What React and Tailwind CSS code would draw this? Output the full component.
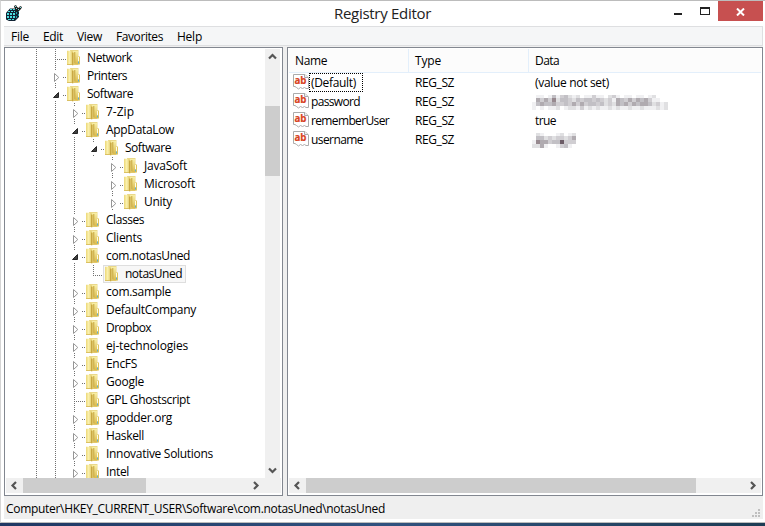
const F = "font-['Open_Sans','Noto_Sans',sans-serif]";

// name, depth, state (c = collapsed, o = open, n = leaf, l = last leaf), continuing guides per outer level
const tree = [
  ["Network", 0, "n", ""],
  ["Printers", 0, "c", ""],
  ["Software", 0, "o", ""],
  ["7-Zip", 1, "c", "|"],
  ["AppDataLow", 1, "o", "|"],
  ["Software", 2, "o", "||"],
  ["JavaSoft", 3, "c", "|| "],
  ["Microsoft", 3, "c", "|| "],
  ["Unity", 3, "c", "|| "],
  ["Classes", 1, "c", "|"],
  ["Clients", 1, "c", "|"],
  ["com.notasUned", 1, "o", "|"],
  ["notasUned", 2, "l", "||"],
  ["com.sample", 1, "c", "|"],
  ["DefaultCompany", 1, "c", "|"],
  ["Dropbox", 1, "c", "|"],
  ["ej-technologies", 1, "c", "|"],
  ["EncFS", 1, "c", "|"],
  ["Google", 1, "c", "|"],
  ["GPL Ghostscript", 1, "n", "|"],
  ["gpodder.org", 1, "c", "|"],
  ["Haskell", 1, "c", "|"],
  ["Innovative Solutions", 1, "c", "|"],
  ["Intel", 1, "c", "|"],
];

const widths = {
  Network: 45, Printers: 40, "7-Zip": 28, AppDataLow: 68, JavaSoft: 43, Microsoft: 51, Unity: 28,
  Software: 46, Classes: 38, Clients: 36, "com.notasUned": 84, notasUned: 57, "com.sample": 65,
  DefaultCompany: 90, Dropbox: 45, "ej-technologies": 82, EncFS: 31, Google: 38, "GPL Ghostscript": 84,
  "gpodder.org": 66, Haskell: 38, "Innovative Solutions": 107, Intel: 23,
};

// Sets a label to an exact advance width by spreading the difference over its letters.
function Label({ w, children, className = "" }) {
  const ref = (el) => {
    if (!el) return;
    el.style.letterSpacing = "0px";
    const natural = el.getBoundingClientRect().width;
    el.style.letterSpacing = `${(w - natural) / children.length}px`;
  };
  return <span ref={ref} className={`inline-block whitespace-pre ${className}`}>{children}</span>;
}

const dots = { stroke: "#707070", strokeWidth: 1, strokeDasharray: "1 1" };

function Guide({ kind }) {
  return (
    <svg width="19" height="18" className="shrink-0 overflow-visible" shapeRendering="crispEdges">
      {(kind === "|" || kind === "n") && <path d="M9.500 0V18" {...dots} />}
      {kind === "l" && <path d="M9.500 0V10" {...dots} />}
      {(kind === "n" || kind === "l") && <path d="M9 10.500H20" {...dots} />}
      {(kind === "c" || kind === "o") && <path d="M9.500 0V4M9.500 16V18M17 10.500H20" {...dots} />}
      {kind === "c" && <path d="M8.500 6.500V14.500L12.800 10.500Z" fill="#fff" stroke="#969696" shapeRendering="auto" />}
      {kind === "o" && <path d="M12.500 7.500V12.500H7.500Z" fill="#404040" stroke="#262626" shapeRendering="auto" />}
    </svg>
  );
}

function Folder() {
  return (
    <svg width="14" height="16" viewBox="0 0 14 16" className="shrink-0">
      <defs>
        <linearGradient id="fa" x1="0" x2="1">
          <stop offset="0" stopColor="#ecd777" />
          <stop offset=".45" stopColor="#fbf2b0" />
          <stop offset="1" stopColor="#dcc25e" />
        </linearGradient>
        <linearGradient id="fb" x1="0" y1="0" x2="0" y2="1">
          <stop offset="0" stopColor="#f8efa8" />
          <stop offset="1" stopColor="#d9b84a" />
        </linearGradient>
      </defs>
      <path d="M3 0H11.500V15H3Z" fill="#ead88a" />
      <path d="M4 1H11V14.500H4Z" fill="url(#fb)" />
      <path d="M11 6.500H13V14.500H11Z" fill="#e0c45c" />
      <path d="M0 .8H5L6 2V15.500L5 15H0Z" fill="url(#fa)" />
      <path d="M5 3L6 2.500V15.200L5 15Z" fill="#c9a842" />
      <path d="M6 3L8 2V13.500L6 15.500Z" fill="#dcc265" />
      <path d="M7.500 2H8.300V13H7.500Z" fill="#c7a742" />
      <path d="M11.500 7V11.500" stroke="#fffce6" />
      <path d="M11.500 11.500V13.500" stroke="#5aaed6" />
      <path d="M0 14.500H5" stroke="#dac062" />
    </svg>
  );
}

function RegString() {
  return (
    <svg width="16" height="16" viewBox="0 0 16 16" className="shrink-0">
      <path d="M.5 .5H12L15.500 4V14.500H13L11.500 13.500L9.500 14.500L7.500 13.500L5.500 15L3.500 13.500L2 12.500H.5Z" fill="#fff" stroke="#ababab" />
      <path d="M11.500 .5V3.500H15" fill="#eee" stroke="#ababab" />
      <text x="1.500" y="10" fontSize="10" fontWeight="700" textLength="12" lengthAdjust="spacingAndGlyphs" fill="#d8431f" stroke="#d8431f" strokeWidth=".2" className="font-['Open_Sans']">ab</text>
    </svg>
  );
}

function RegeditIcon() {
  return (
    <svg width="17" height="17" viewBox="0 0 17 17">
      <path d="M0 8L4 3.500H8L10 5H13V12L9 16H3L0 14.500Z" fill="#123" />
      <path d="M1 8H3V10H1ZM4 8H6V10H4ZM7 8H9V10H7ZM1 11H3V13H1ZM4 11H6V13H4ZM7 11H9V13H7ZM2 14H5V15H2ZM6 14H8V15H6ZM4 4H6V5H4ZM7 4H9V5H7ZM5 6H7V7H5ZM2 6H4V7H2ZM8 6H9V7H8Z" fill="#4be0e0" />
      <path d="M10 7H11V9H10ZM10 11H11V13H10ZM12 9H13V11H12ZM12 6H13V7H12Z" fill="#1ba0a0" />
      <path d="M8 1L10 0L11 2L13 3L14 1L16 2L15 4L13 6L11 7L9 5Z" fill="#1d1d1d" />
      <path d="M9 1H10V2H9ZM10 3H11V4H10ZM12 4H13V5H12ZM14 2H15V3H14Z" fill="#7dd" />
    </svg>
  );
}

const chevrons = {
  left: "M10 4L6.500 7.500L10 11",
  right: "M5 4L8.500 7.500L5 11",
  up: "M4 9.500L7.500 6L11 9.500",
  down: "M4 5.500L7.500 9L11 5.500",
};

function Chevron({ dir }) {
  return (
    <svg width="15" height="15" className="shrink-0">
      <path d={chevrons[dir]} fill="none" stroke="#555" strokeWidth="2.200" />
    </svg>
  );
}

const rows = [
  ["(Default)", 45, "(value not set)", 74],
  ["password", 49, null, "p"],
  ["rememberUser", 78, "true", 21],
  ["username", 52, null, "u"],
];

// Pixelated values, one digit per 4px cell.
const mosaicP = [
  "0 1 1 0 1 4 1 3 4 2 1 2 0 1 1 3 1 1 0 2 3 1 0 1 1 0 1 1 0 1 2 0 0 0",
  "0 5 3 5 3 6 2 4 4 3 2 4 3 4 4 3 4 3 2 3 1 5 4 3 5 3 5 4 5 3 1 1 0 0",
  "1 4 5 4 4 5 3 3 4 3 5 3 5 3 4 4 3 4 2 3 2 5 4 5 3 5 4 5 5 4 2 3 1 2",
  "1 0 1 0 1 1 2 0 1 2 2 1 3 1 2 1 2 1 1 2 1 2 1 1 2 1 1 2 1 1 1 2 1 2",
];
const mosaicU = [
  "0 2 1 0 0 0 1 2 0 1 2",
  "0 4 4 2 3 2 3 3 2 3 5",
  "1 6 5 5 3 4 4 7 3 3 3",
  "2 2 5 1 0 0 1 3 4 1 0",
];
const shades = ["fill-white", "fill-[#f0f0f2]", "fill-[#e0e0e2]", "fill-[#d0ced2]", "fill-[#c2c0c5]", "fill-[#b0abb0]", "fill-[#97898f]", "fill-[#6c5c66]"];

function Mosaic({ data }) {
  return (
    <svg width="136" height="16" className="-ml-[3px] mt-[3px]" shapeRendering="crispEdges">
      {data.map((r, y) => r.split(" ").map((v, x) => (
        <rect key={`${x}-${y}`} x={x * 4} y={y * 4 - (y ? 1 : 0)} width="4" height="4" className={shades[v]} />
      )))}
    </svg>
  );
}

export default function App() {
  return (
    <div className={`${F} flex h-[526px] w-[765px] flex-col overflow-hidden bg-white text-[12px] leading-[18px] text-black`}>
      <div className="flex h-[523px] flex-col border-b border-l border-t border-[#bcbcbc] border-l-[#d5d5d5] pl-[3px]">
        <header className="flex h-[25px] items-start">
          <div className="w-[328px] pl-[2px] pt-[4px]"><RegeditIcon /></div>
          <h1 className="grow pt-px text-[15px] leading-[22px] text-[#222]"><span className="pl-[2px]"><Label w={97}>Registry Editor</Label></span></h1>
          <svg width="44" height="25" shapeRendering="crispEdges" className="shrink-0">
            <path d="M0 12H8V14H0Z" fill="#222" />
            <path d="M26 6H36V14H26ZM27 8V13H35V8Z" fill="#222" fillRule="evenodd" />
          </svg>
          <div className="mr-[2px] flex h-[20px] w-[45px] items-center justify-center bg-[#c75050]">
            <svg width="9" height="8" className="mt-px"><path d="M1 0.500L8 7.500M8 0.500L1 7.500" stroke="#fff" strokeWidth="2" /></svg>
          </div>
        </header>
        <nav className="mr-[2px] flex h-[20px] border-b border-r border-t border-[#dedfe1] bg-[#f5f6f7] pl-[7px] pt-px">
          <div className="w-[32px]"><Label w={18}>File</Label></div>
          <div className="w-[34px]"><Label w={20}>Edit</Label></div>
          <div className="w-[39px]"><Label w={25}>View</Label></div>
          <div className="w-[61px]"><Label w={47}>Favorites</Label></div>
          <div><Label w={25}>Help</Label></div>
        </nav>
        <main className="mr-[2px] flex h-[450px] gap-[4px] bg-[#efefef] pt-px">
          <section className="flex h-[449px] w-[279px] flex-col border border-[#828790] bg-white p-px">
            <div className="flex h-[429px]">
              <div className="w-[259px] overflow-hidden">
                {tree.map(([name, depth, kind, guides], i) => (
                  <div key={i} className="flex h-[18px] pl-[21px]">
                    <Guide kind="|" />
                    {guides.split("").map((g, j) => <Guide key={j} kind={g} />)}
                    <Guide kind={kind} />
                    <div className={`flex h-[18px] shrink-0 items-center pl-px ${kind === "l" ? "border border-[#dedede] bg-[#f7f7f7] pr-[3px]" : "ml-px"}`}>
                      <Folder />
                      <Label w={widths[name]} className="ml-[6px]">{name}</Label>
                    </div>
                  </div>
                ))}
              </div>
              <div className="flex w-[15px] flex-col bg-[#f0f0f0]">
                <Chevron dir="up" />
                <div className="mt-[42px] h-[70px] bg-[#cdcdcd]" />
                <div className="grow" />
                <Chevron dir="down" />
              </div>
            </div>
            <div className="flex h-[15px] items-center bg-[#f0f0f0]">
              <Chevron dir="left" />
              <div className="ml-[2px] h-[15px] w-[123px] bg-[#cdcdcd]" />
              <div className="grow" />
              <div className="mr-[17px]"><Chevron dir="right" /></div>
            </div>
          </section>
          <section className="flex h-[449px] grow flex-col border border-[#828790] bg-white p-px">
            <div className="flex h-[24px] border-b border-[#e3effb] bg-[#fcfcfc]">
              <div className="w-[120px] border-r border-[#e3effb] pl-[6px] pt-[3px]"><Label w={32}>Name</Label></div>
              <div className="w-[120px] border-r border-[#e3effb] pl-[6px] pt-[3px]"><Label w={26}>Type</Label></div>
              <div className="pl-[6px] pt-[3px]"><Label w={24}>Data</Label></div>
            </div>
            <div className="h-[405px] pl-[4px]">
              {rows.map(([name, w, data, dw], i) => (
                <div key={name} className="flex h-[19px]">
                  <div className="flex w-[122px]">
                    <div className="mt-px"><RegString /></div>
                    <div className={`h-[19px] border border-dotted pl-px ${i === 0 ? "w-[54px] border-black" : "border-transparent"}`}><Label w={w}>{name}</Label></div>
                  </div>
                  <div className="w-[120px] pt-px"><Label w={39}>REG_SZ</Label></div>
                  {data ? <div className="pt-px"><Label w={dw}>{data}</Label></div> : <Mosaic data={dw === "p" ? mosaicP : mosaicU} />}
                </div>
              ))}
            </div>
            <div className="flex h-[15px] bg-[#f0f0f0]">
              <Chevron dir="left" />
              <div className="ml-[2px] w-[390px] bg-[#cdcdcd]" />
              <div className="grow" />
              <Chevron dir="right" />
            </div>
          </section>
        </main>
        <footer className="mr-[2px] flex h-[23px] items-start justify-between bg-[#efefef] pl-[2px] pt-[4px]">
          <Label w={379}>{"Computer\\HKEY_CURRENT_USER\\Software\\com.notasUned\\notasUned"}</Label>
          <svg width="11" height="8" className="mr-px mt-[9px]" shapeRendering="crispEdges"><path d="M7 0H9V2H7ZM4 3H6V5H4ZM7 3H9V5H7ZM1 6H3V8H1ZM4 6H6V8H4ZM7 6H9V8H7Z" fill="#bfbfbf" /></svg>
        </footer>
      </div>
      <div className="h-[3px] bg-linear-to-r from-[#1f3763] via-[#31527f] to-[#1d3c54]" />
    </div>
  );
}
